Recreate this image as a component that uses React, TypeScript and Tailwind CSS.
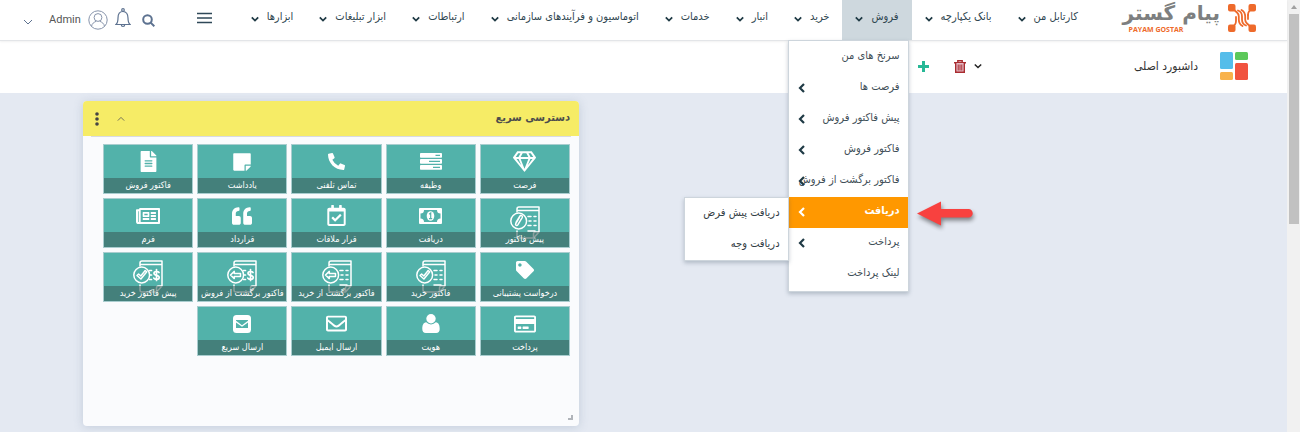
import type { ReactNode } from "react";
import {
  FaRegGem,
  FaPhoneAlt,
  FaStickyNote,
  FaFileAlt,
  FaRegCalendarCheck,
  FaQuoteLeft,
  FaRegNewspaper,
  FaTag,
  FaRegCreditCard,
  FaRegEnvelope,
} from "react-icons/fa";

type ChevronProps = { direction: "down" | "left" | "up"; className: string; weight?: number };

function Chevron({ direction, className, weight = 2.2 }: ChevronProps) {
  const paths = { down: "M1 3 5 7 9 3", left: "M7 1 3 5 7 9", up: "M1 7 5 3 9 7" };
  return (
    <svg viewBox="0 0 10 10" fill="none" stroke="currentColor" strokeWidth={weight} className={className} aria-hidden="true">
      <path d={paths[direction]} />
    </svg>
  );
}

function BrandMark() {
  return (
    <svg viewBox="0 0 28 28" className="size-7" aria-hidden="true">
      <g fill="#ee6a2b">
        <rect x="0" y="0" width="7.500" height="7.500" rx="2" />
        <rect x="20.500" y="0" width="7.500" height="7.500" rx="2" />
        <rect x="0" y="20.500" width="7.500" height="7.500" rx="2" />
        <rect x="20.500" y="20.500" width="7.500" height="7.500" rx="2" />
      </g>
      <g fill="none" stroke="#ee6a2b" strokeWidth="1.800" strokeLinecap="round" strokeLinejoin="round">
        <path d="M5 5l4 3.500c1.500 1.300 1.800 2.500 1.800 4v3c0 3 1 5 3.700 6.500" />
        <path d="M10 6.500c3 1 4 3 4 6v3c0 3 1 5 4 6" />
        <path d="M13.500 6c2.700 1.500 3.700 3.500 3.700 6.500v3c0 1.500.3 2.700 1.800 4L23 23" />
        <path d="M23 5l-2 2.500c-.8 1-1 2-1 3.500M5 23l2-2.500c.8-1 1-2 1-3.500v-4" />
        <path d="M20 11v4" />
      </g>
    </svg>
  );
}

function TasksIcon() {
  return (
    <svg viewBox="0 0 22 17" className="h-[17px] w-[22px]" aria-hidden="true">
      <g fill="currentColor">
        <rect y="0" width="22" height="4.800" rx="0.800" />
        <rect y="6" width="22" height="4.800" rx="0.800" />
        <rect y="12" width="22" height="4.800" rx="0.800" />
      </g>
      <path d="M15.500 2.400h4.500M9 8.400h11M13 14.400h7" stroke="#52b2aa" strokeWidth="1.200" />
    </svg>
  );
}

function MoneyIcon() {
  return (
    <svg viewBox="0 0 23 16" className="h-4 w-[23px]" aria-hidden="true">
      <rect width="23" height="16" rx="1" fill="currentColor" />
      <path d="M5 2h13a3.500 3.500 0 0 0 3.500 3.500v5A3.500 3.500 0 0 0 18 14H5a3.500 3.500 0 0 0-3.500-3.500v-5A3.500 3.500 0 0 0 5 2z" fill="#52b2aa" />
      <ellipse cx="11.500" cy="8" rx="3.800" ry="4.800" fill="currentColor" />
      <path d="M10.200 6.200 11.700 5v5.500M10 10.700h3.200" fill="none" stroke="#52b2aa" strokeWidth="1.200" />
    </svg>
  );
}

function PersonIcon() {
  return (
    <svg viewBox="0 0 18 19" fill="currentColor" className="h-[19px] w-[18px]" aria-hidden="true">
      <circle cx="9" cy="4.800" r="4.700" />
      <path d="M4.200 8.300C1.200 8.600.3 11.500.3 15c0 2.500 1.300 3.900 3.500 3.900h10.400c2.200 0 3.500-1.400 3.500-3.900 0-3.500-.9-6.400-3.900-6.700a6.500 6.500 0 0 1-9.600 0z" />
    </svg>
  );
}

function QuickSendIcon() {
  return (
    <svg viewBox="0 0 18 18" className="size-[18px]" aria-hidden="true">
      <rect width="18" height="18" rx="3.500" fill="currentColor" />
      <path d="M3 5h12v.8l-6 4.400-6-4.400zM3 7.400l6 4.300 6-4.300V13H3z" fill="#52b2aa" />
    </svg>
  );
}

type Badge = "clip" | "check" | "back";

function InvoiceIcon({ badge, currency = false }: { badge: Badge; currency?: boolean }) {
  return (
    <svg viewBox="0 0 30 33" fill="none" stroke="currentColor" strokeWidth="1.500" strokeLinecap="round" strokeLinejoin="round" className="mt-3.5 h-[33px] w-[30px] shrink-0" aria-hidden="true">
      <path d="M7 6V3a2 2 0 0 1 2-2h20v25l-5.500 6H9a2 2 0 0 1-2-2v-5M7 4.500h22M23.500 32v-4a2 2 0 0 1 2-2H29" />
      {currency ? (
        <path strokeWidth="1.700" d="M26 12.500c-.8-1.400-5-1.500-5 .8 0 2.800 5.200 1.400 5.200 4.200 0 2.400-4.500 2.300-5.400.6M23.500 9.500v11M16.500 10.500h2M17 15h1.500M16.500 19.500h2" />
      ) : (
        <path d="M18 10.500h3M24 10.500h2M19 15h2M24 15h2M18 19.500h3M24 19.500h2M18 25h7" />
      )}
      <circle cx="8.700" cy="15" r="7.900" fill="#52b2aa" />
      {badge === "clip" && <path d="M6 16.500l4-6.500c1-1.300 3-.2 2.300 1.300l-4.500 7.600c-1 1.300-2.800.1-2.100-1.200l3.600-6" />}
      {badge === "check" && <path d="M4 15.500l1.600-1.500 2.200 2 4.400-5.500 1.600 1.300-5.900 7.200z" />}
      {badge === "back" && <path d="M3.500 15l3.800-3.600v2h6.200v3.200H7.300v2z" />}
    </svg>
  );
}

const navBefore = ["کارتابل من", "بانک یکپارچه"];
const navAfter = ["خرید", "انبار", "خدمات", "اتوماسیون و فرآیندهای سازمانی", "ارتباطات", "ابزار تبلیغات", "ابزارها"];

const salesMenu = [
  { label: "سرنخ های من", nested: false },
  { label: "فرصت ها", nested: true },
  { label: "پیش فاکتور فروش", nested: true },
  { label: "فاکتور فروش", nested: true },
  { label: "فاکتور برگشت از فروش", nested: true },
  { label: "دریافت", nested: true, active: true },
  { label: "پرداخت", nested: true },
  { label: "لینک پرداخت", nested: false },
];

const shortcuts: { label: string; icon: ReactNode }[] = [
  { label: "فرصت", icon: <FaRegGem size={23} /> },
  { label: "وظیفه", icon: <TasksIcon /> },
  { label: "تماس تلفنی", icon: <FaPhoneAlt size={17} /> },
  { label: "یادداشت", icon: <FaStickyNote size={20} /> },
  { label: "فاکتور فروش", icon: <FaFileAlt size={21} /> },
  { label: "پیش فاکتور", icon: <InvoiceIcon badge="clip" /> },
  { label: "دریافت", icon: <MoneyIcon /> },
  { label: "قرار ملاقات", icon: <FaRegCalendarCheck size={21} /> },
  { label: "قرارداد", icon: <FaQuoteLeft size={20} /> },
  { label: "فرم", icon: <FaRegNewspaper size={24} /> },
  { label: "درخواست پشتیبانی", icon: <FaTag size={18} /> },
  { label: "فاکتور خرید", icon: <InvoiceIcon badge="check" /> },
  { label: "فاکتور برگشت از خرید", icon: <InvoiceIcon badge="back" /> },
  { label: "فاکتور برگشت از فروش", icon: <InvoiceIcon badge="back" currency /> },
  { label: "پیش فاکتور خرید", icon: <InvoiceIcon badge="check" currency /> },
  { label: "پرداخت", icon: <FaRegCreditCard size={22} /> },
  { label: "هویت", icon: <PersonIcon /> },
  { label: "ارسال ایمیل", icon: <FaRegEnvelope size={21} /> },
  { label: "ارسال سریع", icon: <QuickSendIcon /> },
];

function NavItem({ label, active = false }: { label: string; active?: boolean }) {
  return (
    <button
      type="button"
      className={`flex h-10 items-center gap-2 px-[13px] pb-1.5 text-[11px] whitespace-nowrap text-[#2f4650] ${active ? "bg-[#ced8de]" : ""}`}
    >
      {label}
      <Chevron direction="down" className="mt-1 size-2 text-[#1f3a45]" />
    </button>
  );
}

function PointerArrow() {
  return (
    <svg viewBox="0 0 62 32" className="absolute top-0 left-full z-30 ml-2 h-8 w-[62px] drop-shadow-[1px_3px_2px_rgba(0,0,0,0.45)]" aria-hidden="true">
      <path d="M1 16.500 25 4.500v7.500h27.500a4.200 4.200 0 0 1 0 8.500H25V28.500z" fill="#f8413f" />
    </svg>
  );
}

function SalesMenu() {
  return (
    <ul className="absolute top-full right-[3px] z-20 w-[121px] border border-[#cdd5dc] bg-white py-px text-[11px] text-[#3f4f58] shadow-[0_2px_4px_rgba(60,80,100,0.3)]">
      {salesMenu.map((item) => (
        <li key={item.label} className="relative">
          <a
            href="#"
            className={`flex h-[31px] items-center justify-between pr-2 pb-0.5 pl-2 whitespace-nowrap ${item.active ? "bg-[#ff9800] font-bold text-white" : ""}`}
          >
            <span className="min-w-0">{item.label}</span>
            {item.nested && (
              <Chevron direction="left" className={`size-[10px] shrink-0 ${item.active ? "text-white" : "text-[#1f3a45]"}`} />
            )}
          </a>
          {item.active && (
            <>
              <ul className="absolute top-0 right-full w-[105px] border border-[#cdd5dc] bg-white text-[#333d44] shadow-[0_2px_4px_rgba(60,80,100,0.3)]">
                {["دریافت پیش فرض", "دریافت وجه"].map((label) => (
                  <li key={label}>
                    <a href="#" className="flex h-[31px] items-center pr-2 whitespace-nowrap">
                      {label}
                    </a>
                  </li>
                ))}
              </ul>
              <PointerArrow />
            </>
          )}
        </li>
      ))}
    </ul>
  );
}

function Header() {
  return (
    <header className="relative z-10 flex h-[41px] items-start border-b border-[#e3e5e8] bg-white shadow-[0_1px_2px_rgba(0,0,0,0.06)]">
      <a href="#" className="flex h-10 w-[196px] shrink-0 items-start gap-2 pr-[31px]">
        <span className="pt-1">
          <BrandMark />
        </span>
        <span className="flex flex-col font-bold whitespace-nowrap">
          <span className="font-['DejaVu_Sans','Noto_Sans',sans-serif] text-xl leading-[26px] text-[#7d7f80]">پیام گستر</span>
          <span dir="ltr" className="pl-1.5 font-['Open_Sans','Noto_Sans',sans-serif] text-[7px] leading-2 text-[#ee6a2b]">
            PAYAM GOSTAR
          </span>
        </span>
      </a>
      <nav className="flex shrink-0">
        {navBefore.map((label) => (
          <NavItem key={label} label={label} />
        ))}
        <div className="relative">
          <NavItem label="فروش" active />
          <SalesMenu />
        </div>
        {navAfter.map((label) => (
          <NavItem key={label} label={label} />
        ))}
      </nav>
      <div dir="ltr" className="mr-auto flex h-10 items-center pl-[23px] text-[#5d7290]">
        <button type="button" className="flex items-center" aria-label="حساب کاربری">
          <Chevron direction="down" weight={1} className="mt-1 size-[10px]" />
          <span className="ml-4 font-['Roboto','Noto_Sans',sans-serif] text-[11px] text-[#555]">Admin</span>
          <svg viewBox="0 0 20 20" fill="none" stroke="#8794ab" className="ml-[7px] size-5" aria-hidden="true">
            <circle cx="10" cy="10" r="9.200" />
            <circle cx="10" cy="7.500" r="3.900" />
            <path d="M3.500 16.500c.3-3 2.500-4.200 4.800-5.300M16.500 16.500c-.3-3-2.500-4.200-4.800-5.300" />
          </svg>
        </button>
        <button type="button" className="mb-1 ml-[7px]" aria-label="اعلان ها">
          <svg viewBox="0 0 16 20" fill="none" stroke="currentColor" strokeWidth="1.200" className="h-5 w-4" aria-hidden="true">
            <circle cx="8" cy="2" r="1.300" />
            <path d="M1 16.500h14c-1.700-1.500-2-3-2-6.500 0-4-1.800-6.500-5-6.500S3 6 3 10c0 3.500-.3 5-2 6.500zM6.300 16.800a1.700 1.700 0 0 0 3.400 0" />
          </svg>
        </button>
        <button type="button" className="ml-[11px]" aria-label="جستجو">
          <svg viewBox="0 0 13 13" fill="none" stroke="currentColor" strokeWidth="2" className="size-[13px]" aria-hidden="true">
            <circle cx="5.500" cy="5.500" r="4.300" />
            <path d="M8.600 8.600l3.700 3.700" />
          </svg>
        </button>
        <button type="button" className="mb-1 ml-[42px]" aria-label="منو">
          <svg viewBox="0 0 15 12" stroke="#2f4858" strokeWidth="1.600" className="h-3 w-[15px]" aria-hidden="true">
            <path d="M0 1.500h15M0 6h15M0 10.500h15" />
          </svg>
        </button>
      </div>
    </header>
  );
}

function DashboardBar() {
  return (
    <div className="flex h-[52px] items-center bg-white pr-[39px] pb-0.5">
      <svg viewBox="0 0 28 28" className="size-7" aria-hidden="true">
        <rect width="13" height="17" rx="1.500" fill="#55bdea" />
        <rect x="15" width="13" height="8" rx="1.500" fill="#5cc85a" />
        <rect x="15" y="11" width="13" height="17" rx="1.500" fill="#f1533f" />
        <rect y="20" width="13" height="8" rx="1.500" fill="#f8b24b" />
      </svg>
      <h1 className="mr-[22px] text-xs whitespace-nowrap text-[#333]">داشبورد اصلی</h1>
      <button type="button" className="mr-[152px] flex items-center gap-2" aria-label="حذف داشبورد">
        <Chevron direction="down" weight={1.8} className="size-2 text-[#222]" />
        <svg viewBox="0 0 12 13" fill="none" stroke="#a92c30" strokeWidth="1.400" className="h-[13px] w-3" aria-hidden="true">
          <path d="M0 2.700h12M3.800 2.500V.8h4.400v1.700" />
          <path d="M1.700 3v9.200h8.600V3" fill="#e3b9c4" />
          <path d="M4.200 4.500v6M6 4.500v6M7.800 4.500v6" strokeWidth="1" />
        </svg>
      </button>
      <button type="button" className="mr-[25px]" aria-label="افزودن">
        <svg viewBox="0 0 11 11" stroke="#27b896" strokeWidth="3" className="size-[11px]" aria-hidden="true">
          <path d="M5.500 0v11M0 5.500h11" />
        </svg>
      </button>
    </div>
  );
}

function QuickAccess() {
  return (
    <section className="relative mt-2 mr-auto ml-[83px] min-h-[325px] w-[496px] max-w-full rounded-sm bg-[#fafbfd] shadow-[0_1px_10px_rgba(120,140,165,0.3)]">
      <div className="flex h-[35px] items-center rounded-t-sm bg-[#f6ec66] pr-[9px] pl-3">
        <h2 className="text-[11px] font-bold text-[#4c4c4c]">دسترسی سریع</h2>
        <button type="button" className="mr-auto" aria-label="جمع کردن">
          <Chevron direction="up" weight={1} className="size-2 text-[#555]" />
        </button>
        <button type="button" className="mr-[18px]" aria-label="گزینه ها">
          <svg viewBox="0 0 4 14" fill="#444" className="h-3.5 w-1" aria-hidden="true">
            <circle cx="2" cy="2" r="1.800" />
            <circle cx="2" cy="7" r="1.800" />
            <circle cx="2" cy="12" r="1.800" />
          </svg>
        </button>
      </div>
      <div className="mx-2 border-t border-[#d8dbe2]" />
      <div className="grid grid-cols-5 gap-1 pt-[7px] pr-[9px] pl-5">
        {shortcuts.map((item) => (
          <a key={item.label} href="#" className="flex h-[50px] flex-col border border-[#a9cdcf] bg-[#52b2aa] text-white">
            <span className="flex h-[33px] items-center justify-center">{item.icon}</span>
            <span className="relative z-[1] flex h-[15px] items-center justify-center bg-[#3c5f5c]/60 text-[9px] whitespace-nowrap">
              {item.label}
            </span>
          </a>
        ))}
      </div>
      <div className="absolute right-1.5 bottom-1.5 size-[5px] border-r-2 border-b-2 border-[#b0b4ba]" />
    </section>
  );
}

function PageScrollbar() {
  return (
    <div className="flex w-[13px] shrink-0 flex-col items-center bg-[#f1f1f1]" aria-hidden="true">
      <div className="flex h-3.5 items-center">
        <svg viewBox="0 0 6 4" fill="#a0a0a0" className="h-1 w-1.5">
          <path d="M0 4l3-4 3 4z" />
        </svg>
      </div>
      <div className="h-[210px] w-2.5 bg-[#c1c1c1]" />
    </div>
  );
}

export default function App() {
  return (
    <div className="flex min-h-screen bg-[#e4e9f2] font-['DejaVu_Sans_Condensed','DejaVu_Sans','Noto_Sans',sans-serif]">
      <main dir="rtl" className="min-w-0 flex-1">
        <Header />
        <DashboardBar />
        <QuickAccess />
      </main>
      <PageScrollbar />
    </div>
  );
}
